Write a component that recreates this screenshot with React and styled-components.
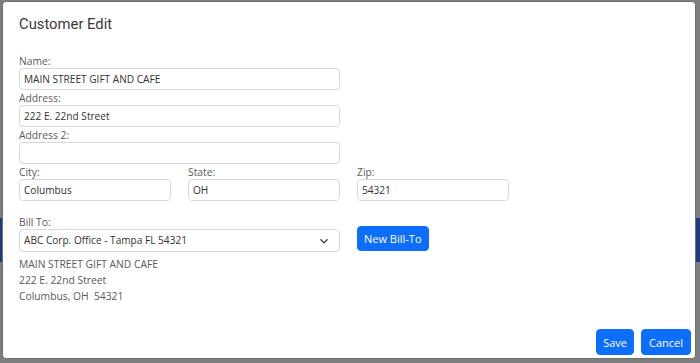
import React from "react";
import styled, { createGlobalStyle } from "styled-components";

const GlobalStyle = createGlobalStyle`
  html, body {
    margin: 0;
    padding: 0;
    width: 700px;
    height: 363px;
    overflow: hidden;
    background: #7d7d7d;
  }
  * {
    box-sizing: border-box;
  }
`;

const Page = styled.div`
  width: 700px;
  height: 363px;
  position: relative;
  overflow: hidden;
  background: #7d7d7d;
  font-family: "Open Sans", sans-serif;
  display: flex;
  flex-direction: column;
`;

const BackBar = styled.div`
  flex-shrink: 0;
  margin-top: 218px;
  height: 44px;
  background: #1b3d78;
`;

const BackRow = styled.div`
  flex-shrink: 0;
  display: flex;
  padding: 98px 0 0 0;
  font-size: 11px;
  line-height: 14px;
  color: #2a2a2a;
`;

const BackCell = styled.span`
  display: block;
  width: ${({ w }) => w}px;
`;

const Modal = styled.div`
  position: absolute;
  left: 2px;
  top: 1px;
  width: 694px;
  height: 358px;
  background: #fff;
  border: 1px solid #6e6e6e;
  border-radius: 4px;
  display: flex;
  flex-direction: column;
`;

const Header = styled.div`
  padding: 12px 16px 0;
  height: 51px;
`;

const Title = styled.h5`
  margin: 0;
  font-family: "Roboto", "Liberation Sans", sans-serif;
  font-weight: 400;
  font-size: 14.8px;
  line-height: 20px;
  color: #3a3a3a;
`;

const Body = styled.div`
  padding: 0 16px;
  flex: 1;
`;

const Grid = styled.div`
  display: grid;
  grid-template-columns: 152px 152px 152px;
  column-gap: 17px;
  align-items: end;
`;

const Field = styled.div`
  grid-column: ${({ wide, col }) => (wide ? "1 / span 2" : col || "auto")};
  margin-top: ${({ mt }) => mt || 0}px;
  display: flex;
  flex-direction: column;
`;

const Label = styled.label`
  font-size: 10.3px;
  line-height: 16px;
  height: 15px;
  color: #5a5a5a;
`;

const Input = styled.div`
  height: 22px;
  border: 1px solid #d6dae0;
  border-radius: 4px;
  padding: 0 4px;
  font-size: 10.1px;
  line-height: 20px;
  color: #333;
  white-space: nowrap;
  overflow: hidden;
`;

const Select = styled(Input)`
  height: 23px;
  line-height: 21px;
  display: flex;
  align-items: center;
  justify-content: space-between;
  padding-right: 10px;
`;

const Button = styled.button`
  background: #0d6efd;
  color: #fff;
  border: 1px solid #0d6efd;
  border-radius: 4px;
  font-family: "Open Sans", sans-serif;
  font-size: 11px;
  height: 26px;
  padding: 0 ${({ px }) => px || 7}px;
  white-space: nowrap;
  cursor: pointer;
`;

const BillButton = styled(Button)`
  grid-column: 3;
  justify-self: start;
  height: 25px;
  margin-bottom: 1px;
`;

const AddressBlock = styled.div`
  grid-column: 1 / -1;
  margin-top: 4px;
  font-size: 10.3px;
  line-height: 16px;
  color: #5a5a5a;
`;

const Footer = styled.div`
  display: flex;
  justify-content: flex-end;
  gap: 7px;
  padding: 0 4px 3px 0;
`;

const Chevron = () => (
  <svg width="10" height="10" viewBox="0 0 16 16" fill="none">
    <path
      d="M3 6l5 5 5-5"
      stroke="#343a40"
      strokeWidth="2"
      strokeLinecap="round"
      strokeLinejoin="round"
    />
  </svg>
);

const App = () => {
  return (
    <Page>
      <GlobalStyle />
      <BackBar />
      <BackRow>
        <BackCell w={115}>Code</BackCell>
        <BackCell w={140}>Description:</BackCell>
        <BackCell w={70}>Price:</BackCell>
        <BackCell w={60}>Unit:</BackCell>
      </BackRow>
      <Modal>
        <Header>
          <Title>Customer Edit</Title>
        </Header>
        <Body>
          <Grid>
            <Field wide>
              <Label>Name:</Label>
              <Input>MAIN STREET GIFT AND CAFE</Input>
            </Field>
            <Field wide>
              <Label>Address:</Label>
              <Input>222 E. 22nd Street</Input>
            </Field>
            <Field wide>
              <Label>Address 2:</Label>
              <Input />
            </Field>
            <Field col={1}>
              <Label>City:</Label>
              <Input>Columbus</Input>
            </Field>
            <Field>
              <Label>State:</Label>
              <Input>OH</Input>
            </Field>
            <Field>
              <Label>Zip:</Label>
              <Input>54321</Input>
            </Field>
            <Field wide mt={13}>
              <Label>Bill To:</Label>
              <Select>
                <span>ABC Corp. Office - Tampa FL 54321</span>
                <Chevron />
              </Select>
            </Field>
            <BillButton px={6}>New Bill-To</BillButton>
            <AddressBlock>
              MAIN STREET GIFT AND CAFE
              <br />
              222 E. 22nd Street
              <br />
              Columbus, OH&nbsp; 54321
            </AddressBlock>
          </Grid>
        </Body>
        <Footer>
          <Button px={6}>Save</Button>
          <Button px={7}>Cancel</Button>
        </Footer>
      </Modal>
    </Page>
  );
};

export default App;
